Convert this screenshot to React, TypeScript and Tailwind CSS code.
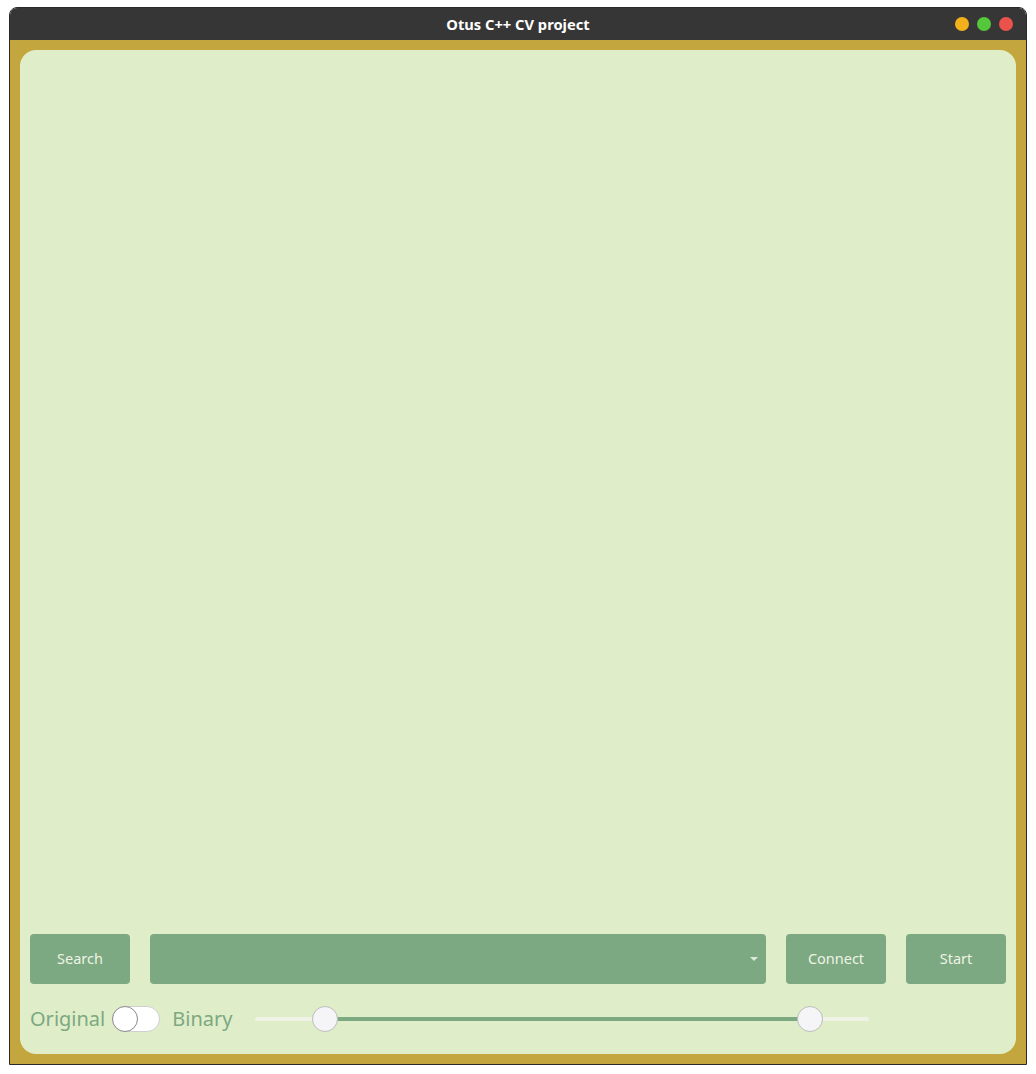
const font = { fontFamily: '"Noto Sans", "Open Sans", sans-serif' };

function Button({ label }: { label: string }) {
  return (
    <button className="flex h-[50px] w-[100px] shrink-0 items-center justify-center rounded-[4px] bg-[#7ca882] text-[14.5px] text-[#eef4e4]">
      {label}
    </button>
  );
}

function RangeSlider({ low, high }: { low: number; high: number }) {
  return (
    <div className="relative h-[26px] w-[614px]">
      <div className="absolute left-0 right-0 top-[11px] h-[4px] rounded-full bg-[#eef3e6]" />
      <div
        className="absolute top-[11px] h-[4px] bg-[#7ca882]"
        style={{ left: low, width: high - low }}
      />
      {[low, high].map((x) => (
        <div
          key={x}
          className="absolute top-0 h-[26px] w-[26px] rounded-full border border-[#bdbdbd] bg-[#f5f5f7]"
          style={{ left: x - 13 }}
        />
      ))}
    </div>
  );
}

export default function App() {
  return (
    <div className="min-h-screen bg-white px-[9px] pt-[7px]" style={font}>
      <div className="w-[1018px] overflow-hidden rounded-t-[8px] border border-[#2a2a2a]">
        <div className="relative flex h-[32px] items-center justify-center bg-[#363636]">
          <span className="text-[14.7px] font-bold text-white">Otus C++ CV project</span>
          <div className="absolute right-[13px] top-[9px] flex gap-[8px]">
            <span className="h-[14px] w-[14px] rounded-full bg-[#f4b01b]" />
            <span className="h-[14px] w-[14px] rounded-full bg-[#54c83a]" />
            <span className="h-[14px] w-[14px] rounded-full bg-[#e9534b]" />
          </div>
        </div>
        <div className="bg-[#c4a63f] p-[10px]">
          <div className="flex h-[1004px] flex-col justify-end gap-[22px] rounded-[16px] bg-[#dfeec8] px-[10px] pb-[22px]">
            <div className="flex gap-[20px]">
              <Button label="Search" />
              <div className="relative flex h-[50px] flex-1 items-center justify-end rounded-[4px] bg-[#7ca882] pr-[8px]">
                <svg width="8" height="4" viewBox="0 0 8 4">
                  <path d="M0 0h8L4 4z" fill="#dfe8da" />
                </svg>
              </div>
              <Button label="Connect" />
              <Button label="Start" />
            </div>
            <div className="flex h-[26px] items-center">
              <span className="text-[20px] leading-none text-[#7ca882]">Original</span>
              <div className="relative ml-[7px] h-[26px] w-[48px] rounded-full border border-[#d0d0d0] bg-white">
                <div className="absolute left-[-1px] top-[-1px] h-[26px] w-[26px] rounded-full border border-[#8a8a8a] bg-white" />
              </div>
              <span className="ml-[12px] text-[20px] leading-none text-[#7ca882]">Binary</span>
              <div className="ml-[23px]">
                <RangeSlider low={70} high={555} />
              </div>
            </div>
          </div>
        </div>
      </div>
    </div>
  );
}
